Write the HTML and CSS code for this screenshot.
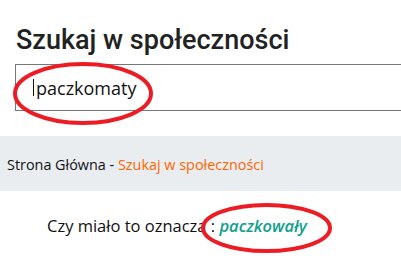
FILE: index.html
```html
<!DOCTYPE html>
<html lang="pl">
<head>
<meta charset="utf-8">
<title>Szukaj w społeczności</title>
<link rel="stylesheet" href="styles.css">
</head>
<body>
<div class="page">
  <h1 class="title">Szukaj w społeczności</h1>
  <div class="search">
    <span class="caret"></span><span class="query">paczkomaty</span>
  </div>
  <div class="crumbs">
    <span class="home">Strona Główna</span> - <span class="current">Szukaj w społeczności</span>
  </div>
  <p class="suggest">Czy miało to oznacza : <a class="alt">paczkowały</a></p>
</div>
<svg class="marks" width="401" height="259" viewBox="0 0 401 259">
  <ellipse cx="83" cy="93.5" rx="68" ry="29.5" fill="none" stroke="#ec1c24" stroke-width="4"/>
  <ellipse cx="266.5" cy="228" rx="63.5" ry="23" fill="none" stroke="#ec1c24" stroke-width="4"/>
</svg>
</body>
</html>
```
FILE: styles.css
```css
html, body {
  margin: 0;
  padding: 0;
  background: #fff;
  overflow: hidden;
}
body {
  width: 401px;
  height: 259px;
  position: relative;
}
.page {
  display: flex;
  flex-direction: column;
}
.title {
  margin: 0;
  padding: 24px 0 0 16px;
  height: 40px;
  font-family: Roboto, "Liberation Sans", sans-serif;
  font-weight: 500;
  font-size: 27px;
  line-height: 32px;
  color: #222;
}
.search {
  margin: 0 0 0 15px;
  height: 45px;
  border: 1px solid #777;
  border-right: none;
  display: flex;
  align-items: center;
  padding-left: 17px;
  font-family: "Open Sans", sans-serif;
  font-size: 18px;
  color: #111;
}
.caret {
  width: 1px;
  height: 17px;
  background: #111;
  margin-right: 2px;
}
.crumbs {
  margin-top: 25px;
  height: 55px;
  background: #eaedf0;
  display: flex;
  align-items: center;
  padding-left: 7px;
  padding-top: 1px;
  box-sizing: border-box;
  font-family: "Open Sans", sans-serif;
  font-size: 14.4px;
  color: #111;
  white-space: pre;
}
.current {
  color: #ff6600;
}
.suggest {
  margin: 23px 0 0 47px;
  font-family: "Open Sans", sans-serif;
  font-size: 16.5px;
  line-height: 24px;
  color: #111;
}
.alt {
  color: #0fa08c;
  font-weight: 600;
  font-style: italic;
}
.marks {
  position: absolute;
  left: 0;
  top: 0;
  pointer-events: none;
}
```
